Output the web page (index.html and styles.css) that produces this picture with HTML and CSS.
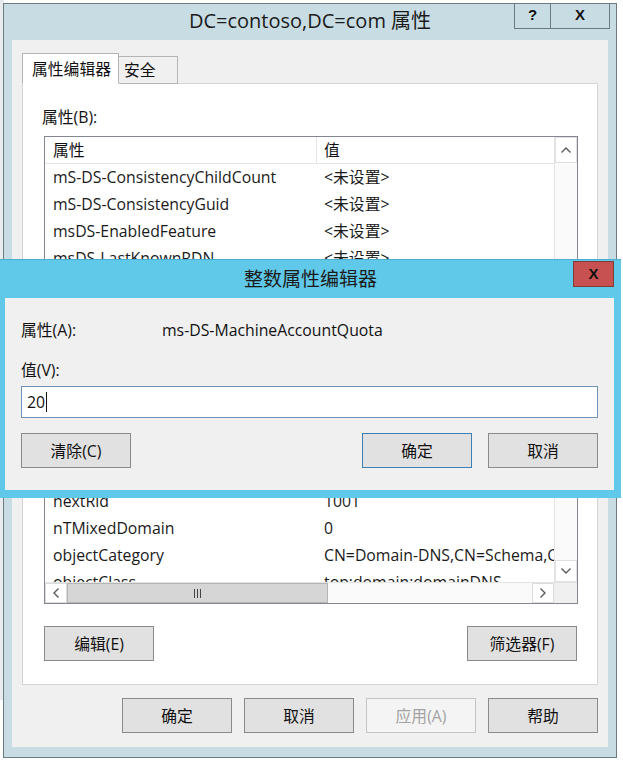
FILE: index.html
```html
<!DOCTYPE html>
<html lang="zh-CN">
<head>
<meta charset="utf-8">
<title>DC=contoso,DC=com 属性</title>
<link rel="stylesheet" href="styles.css">
</head>
<body>
<div class="desktop">
  <div class="behind"></div>
  <div class="window">
    <div class="titlebar">
      <span></span>
      <span class="title">DC=contoso,DC=com 属性</span>
      <div class="caption">
        <div class="cap-btn help">?</div>
        <div class="cap-btn close">X</div>
      </div>
    </div>
    <div class="client">
      <div class="tabs">
        <div class="tab active">属性编辑器</div>
        <div class="tab">安全</div>
      </div>
      <div class="panel">
        <div class="label">属性(B):</div>
        <div class="listbox">
          <div class="list-main">
            <div class="list-view">
              <div class="header">
                <div class="c1">属性</div>
                <div class="c2">值</div>
              </div>
              <div class="row"><div class="c1">mS-DS-ConsistencyChildCount</div><div class="c2">&lt;未设置&gt;</div></div>
              <div class="row"><div class="c1">mS-DS-ConsistencyGuid</div><div class="c2">&lt;未设置&gt;</div></div>
              <div class="row"><div class="c1">msDS-EnabledFeature</div><div class="c2">&lt;未设置&gt;</div></div>
              <div class="row"><div class="c1">msDS-LastKnownRDN</div><div class="c2">&lt;未设置&gt;</div></div>
              <div class="row"></div>
              <div class="row"></div>
              <div class="row"></div>
              <div class="row"></div>
              <div class="row"></div>
              <div class="row"></div>
              <div class="row"></div>
              <div class="row"></div>
              <div class="row"><div class="c1">nextRid</div><div class="c2">1001</div></div>
              <div class="row"><div class="c1">nTMixedDomain</div><div class="c2">0</div></div>
              <div class="row"><div class="c1">objectCategory</div><div class="c2">CN=Domain-DNS,CN=Schema,CN=Configuration,DC=contoso,DC=com</div></div>
              <div class="row"><div class="c1">objectClass</div><div class="c2">top;domain;domainDNS</div></div>
            </div>
            <div class="vscroll">
              <div class="arrow up">
                <svg width="12" height="8" viewBox="0 0 12 8"><polyline points="1.5,6.5 6,2 10.5,6.5" fill="none" stroke="#5a5a5a" stroke-width="1.4"/></svg>
              </div>
              <div class="vtrack"></div>
              <div class="arrow down">
                <svg width="12" height="8" viewBox="0 0 12 8"><polyline points="1.5,1.5 6,6 10.5,1.5" fill="none" stroke="#5a5a5a" stroke-width="1.4"/></svg>
              </div>
            </div>
          </div>
          <div class="hrow">
            <div class="hscroll">
              <div class="harrow">
                <svg width="8" height="12" viewBox="0 0 8 12"><polyline points="6.5,1.5 2,6 6.5,10.5" fill="none" stroke="#5a5a5a" stroke-width="1.4"/></svg>
              </div>
              <div class="hthumb"><span class="grip"></span><span class="grip"></span><span class="grip"></span></div>
              <div class="htrack"></div>
              <div class="harrow">
                <svg width="8" height="12" viewBox="0 0 8 12"><polyline points="1.5,1.5 6,6 1.5,10.5" fill="none" stroke="#5a5a5a" stroke-width="1.4"/></svg>
              </div>
            </div>
            <div class="corner"></div>
          </div>
        </div>
        <div class="panel-btns">
          <div class="btn">编辑(E)</div>
          <div class="btn">筛选器(F)</div>
        </div>
      </div>
      <div class="footer">
        <div class="btn">确定</div>
        <div class="btn">取消</div>
        <div class="btn disabled">应用(A)</div>
        <div class="btn">帮助</div>
      </div>
    </div>
  </div>

  <div class="dialog">
    <div class="dtitlebar">
      <span></span>
      <span class="dtitle">整数属性编辑器</span>
      <div class="dclose">X</div>
    </div>
    <div class="dbody">
      <div class="attr-row">
        <span class="attr-label">属性(A):</span>
        <span class="attr-value">ms-DS-MachineAccountQuota</span>
      </div>
      <div class="val-label">值(V):</div>
      <div class="input"><span class="typed">20</span><span class="caret"></span></div>
      <div class="dbtns">
        <div class="btn">清除(C)</div>
        <div class="spacer"></div>
        <div class="btn default">确定</div>
        <div class="btn">取消</div>
      </div>
    </div>
  </div>
</div>
</body>
</html>
```

FILE: styles.css
```css
* { box-sizing: border-box; }

body {
  margin: 0;
  background: #ffffff;
  font-family: "Open Sans", "Noto Sans CJK SC", sans-serif;
  font-size: 15.8px;
  color: #111;
}

.desktop {
  position: relative;
  width: 623px;
  height: 761px;
  overflow: hidden;
  background: #ffffff;
}

.behind {
  position: absolute;
  left: 0;
  top: 0;
  width: 4px;
  height: 700px;
  background: #e9ecee;
}

/* ---------- main window ---------- */
.window {
  position: absolute;
  left: 3px;
  top: 3px;
  width: 614px;
  height: 755px;
  border: 1px solid #6d7a80;
  background: #c8dce3;
  display: flex;
  flex-direction: column;
}

.titlebar {
  height: 36px;
  display: grid;
  grid-template-columns: 1fr auto 1fr;
  align-items: start;
}

.title {
  font-size: 20px;
  line-height: 34px;
  color: #1b1b1b;
  white-space: nowrap;
}

.caption {
  justify-self: end;
  display: flex;
  margin-top: -1px;
  margin-right: 6px;
}

.cap-btn {
  height: 26px;
  border: 1px solid #6d7a80;
  border-top: none;
  font-family: "Liberation Sans", sans-serif;
  font-weight: bold;
  font-size: 15px;
  line-height: 24px;
  text-align: center;
  color: #111;
}
.cap-btn.help { width: 37px; }
.cap-btn.close { width: 59px; border-left: none; }

.client {
  flex: 1;
  margin: 0 8px 10px;
  background: #f0f0f0;
  padding: 13px 10px 0;
  display: flex;
  flex-direction: column;
}

.tabs {
  display: flex;
  align-items: flex-end;
  height: 31px;
  margin-bottom: -1px;
  position: relative;
  z-index: 1;
}

.tab {
  height: 28px;
  width: 59px;
  border: 1px solid #b4b4b4;
  border-left: none;
  background: #f0f0f0;
  padding-left: 5px;
  line-height: 27px;
  color: #111;
}
.tab.active {
  width: 97px;
  height: 31px;
  border-left: 1px solid #b4b4b4;
  border-bottom: 1px solid #ffffff;
  background: #ffffff;
  padding-left: 9px;
  line-height: 30px;
}

.panel {
  flex: 1;
  border: 1px solid #d4d4d4;
  background: #ffffff;
  padding: 0 20px 0 21px;
  display: flex;
  flex-direction: column;
}

.label {
  margin: 22px 0 0 -2px;
  line-height: 22px;
}

.listbox {
  margin-top: 8px;
  width: 534px;
  height: 468px;
  border: 1px solid #828790;
  display: flex;
  flex-direction: column;
}

.list-main {
  display: flex;
  height: 445px;
}

.list-view {
  width: 509px;
  overflow: hidden;
}

.header {
  display: flex;
  height: 27px;
  border-bottom: 1px solid #e5e5e5;
  line-height: 26px;
}
.header .c1 { border-right: 1px solid #e5e5e5; }

.row {
  display: flex;
  height: 27px;
  line-height: 27px;
  white-space: nowrap;
  color: #1a1a1a;
}

.c1 {
  width: 272px;
  flex: none;
  padding-left: 8px;
  overflow: hidden;
}
.c2 {
  padding-left: 7px;
  white-space: nowrap;
}

.vscroll {
  width: 23px;
  flex: none;
  display: flex;
  flex-direction: column;
  background: #fafafa;
  border-left: 1px solid #e3e3e3;
}

.arrow {
  display: flex;
  align-items: center;
  justify-content: center;
  background: #ffffff;
  border: 1px solid #e1e1e1;
}
.arrow.up { height: 26px; }
.arrow.down { height: 22px; }

.vtrack { flex: 1; }

.hrow {
  display: flex;
  height: 21px;
  border-top: 1px solid #e3e3e3;
}

.hscroll {
  width: 509px;
  display: flex;
  background: #fafafa;
}

.harrow {
  width: 22px;
  display: flex;
  align-items: center;
  justify-content: center;
  background: #ffffff;
  border: 1px solid #dcdcdc;
}

.hthumb {
  width: 261px;
  background: #d6d6d6;
  border: 1px solid #b5b5b5;
  display: flex;
  align-items: center;
  justify-content: center;
  gap: 2px;
}
.grip {
  width: 1px;
  height: 9px;
  background: #444;
}

.htrack { flex: 1; }

.corner {
  flex: 1;
  background: #f0f0f0;
}

.panel-btns {
  margin-top: 22px;
  display: flex;
  justify-content: space-between;
  width: 533px;
}

.btn {
  width: 110px;
  height: 35px;
  border: 1px solid #8a8a8a;
  background: #e1e1e1;
  display: flex;
  align-items: center;
  justify-content: center;
  color: #111;
  white-space: nowrap;
}
.btn.disabled {
  background: #f4f4f4;
  border-color: #c4c4c4;
  color: #a3a3a3;
}
.btn.default {
  border-color: #3d7fb5;
}

.footer {
  margin: 13px 0 14px;
  display: flex;
  justify-content: flex-end;
  gap: 12px;
}

/* ---------- integer editor dialog ---------- */
.dialog {
  position: absolute;
  left: 0;
  top: 259px;
  width: 621px;
  height: 239px;
  background: #60c8e8;
  border-top: 1px solid #4aaed0;
  display: flex;
  flex-direction: column;
}

.dtitlebar {
  height: 38px;
  display: grid;
  grid-template-columns: 1fr auto 1fr;
  align-items: start;
}

.dtitle {
  font-size: 19px;
  line-height: 38px;
  color: #1b1b1b;
  white-space: nowrap;
}

.dclose {
  justify-self: end;
  margin: 1px 7px 0 0;
  width: 41px;
  height: 26px;
  background: #c75050;
  border: 1px solid #7f3a3a;
  font-family: "Liberation Sans", sans-serif;
  font-weight: bold;
  font-size: 15px;
  line-height: 24px;
  text-align: center;
  color: #111;
}

.dbody {
  flex: 1;
  margin: 0 7px 8px 5px;
  background: #f0f0f0;
  padding: 0 16px;
  display: flex;
  flex-direction: column;
}

.attr-row {
  margin-top: 21px;
  line-height: 22px;
  display: flex;
}
.attr-label { width: 141px; }

.val-label {
  margin-top: 18px;
  line-height: 22px;
}

.input {
  margin-top: 5px;
  height: 32px;
  border: 1px solid #6f93b8;
  background: #ffffff;
  display: flex;
  align-items: center;
  padding-left: 5px;
}
.typed { line-height: 20px; }
.caret {
  width: 1px;
  height: 20px;
  background: #111;
  margin-left: 1px;
}

.dbtns {
  margin-top: 15px;
  display: flex;
  gap: 16px;
}
.spacer { flex: 1; }
```
